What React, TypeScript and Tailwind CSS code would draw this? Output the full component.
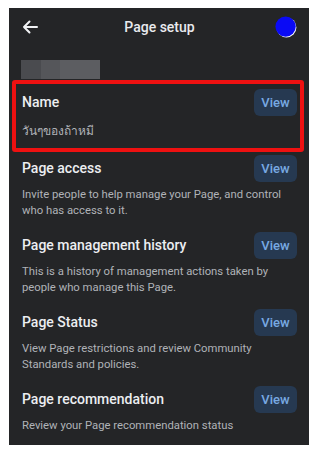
import React from 'react';

const sections = [
  {
    title: 'Page access',
    desc: 'Invite people to help manage your Page, and control who has access to it.',
  },
  {
    title: 'Page management history',
    desc: 'This is a history of management actions taken by people who manage this Page.',
  },
  {
    title: 'Page Status',
    desc: 'View Page restrictions and review Community Standards and policies.',
  },
  {
    title: 'Page recommendation',
    desc: 'Review your Page recommendation status',
  },
];

function ViewButton() {
  return (
    <button className="w-[43px] h-[27px] rounded-[6px] bg-[#263951] text-[#78a9e3] text-[13px] font-medium leading-none">
      View
    </button>
  );
}

function Avatar() {
  return (
    <svg width="22" height="22" viewBox="0 0 22 22">
      <circle cx="11.4" cy="11.4" r="10" fill="#ffffff" />
      <circle cx="10.6" cy="10.6" r="10.2" fill="#0a0af5" />
    </svg>
  );
}

export default function App() {
  return (
    <div className="w-[315px] h-[453px] bg-white pt-[8px] pl-[9px] font-['Roboto','Noto_Sans',sans-serif]">
      <div className="relative w-[300px] h-[437px] bg-[#242527] overflow-hidden">
        {/* header */}
        <div className="h-[38px] grid grid-cols-[1fr_auto_1fr] items-center pl-[13px] pr-[12px]">
          <svg width="16" height="14" viewBox="0 0 16 14" className="justify-self-start">
            <path d="M15 7H2M7.5 1.5L2 7l5.5 5.5" fill="none" stroke="#f2f3f5" strokeWidth="2" strokeLinecap="round" strokeLinejoin="round" />
          </svg>
          <div className="text-[14px] text-[#e9eaee] font-medium">Page setup</div>
          <div className="justify-self-end">
            <Avatar />
          </div>
        </div>

        {/* blurred placeholder */}
        <div className="mt-[14px] ml-[12px] flex w-[79px] h-[19px]">
          <div className="w-[20px] bg-[#4a4b4f]" />
          <div className="w-[19px] bg-[#55565a]" />
          <div className="flex-1 bg-[#5c5d61]" />
        </div>

        {/* name */}
        <div className="pt-[10px] pl-[13px] pr-[12px] pb-[15px]">
          <div className="flex items-center justify-between">
            <div className="text-[14px] text-[#eceef1] font-medium">Name</div>
            <ViewButton />
          </div>
          <div className="mt-[6px] text-[12px] leading-[18px] text-[#b0b3b8]">วันๆของถ้าหมี</div>
        </div>

        {sections.map((s) => (
          <div key={s.title} className="pl-[13px] pr-[12px] pb-[13px]">
            <div className="flex items-center justify-between">
              <div className="text-[14px] text-[#eceef1] font-medium">{s.title}</div>
              <ViewButton />
            </div>
            <p className="mt-[5px] text-[11.3px] leading-[16px] text-[#b0b3b8]">{s.desc}</p>
          </div>
        ))}

        {/* highlight annotation */}
        <div className="absolute left-[3px] top-[72px] w-[292px] h-[72px] border-4 border-[#ee1111] rounded-[3px]" />
      </div>
    </div>
  );
}
